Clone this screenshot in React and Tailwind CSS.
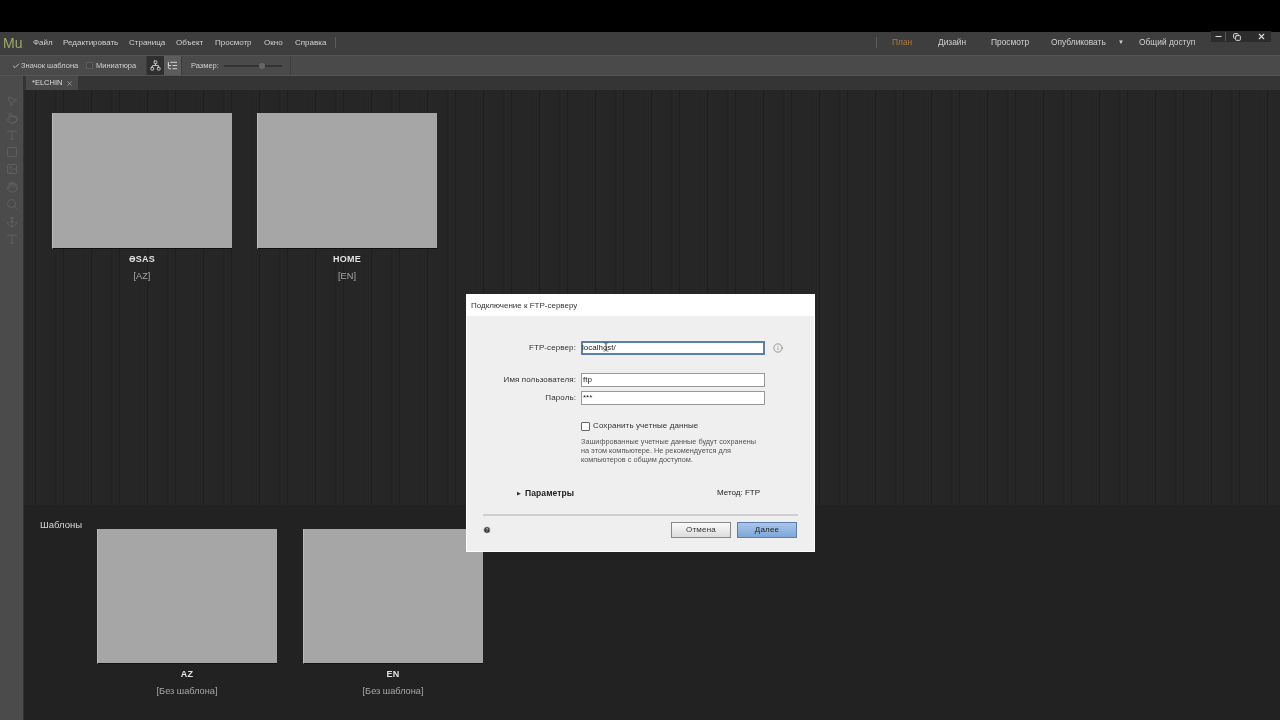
import { Anchor, Check, Hand, Info, ListTree, Minus, MousePointer2, Network, Search, Square, Type, X, Copy, Image, CircleHelp, Pointer, TextCursor } from "lucide-react"

const menus = [
  { label: "Файл", w: "w-[30px]" },
  { label: "Редактировать", w: "w-[66px]" },
  { label: "Страница", w: "w-[47px]" },
  { label: "Объект", w: "w-[39px]" },
  { label: "Просмотр", w: "w-[49px]" },
  { label: "Окно", w: "w-[31px]" },
  { label: "Справка", w: "w-[40px]" },
]

const tools = [
  { icon: MousePointer2, cls: "mt-[5px]" },
  { icon: Pointer, cls: "mt-[5px]" },
  { icon: Type, cls: "mt-[5px]" },
  { icon: Square, cls: "mt-[5px]" },
  { icon: Image, cls: "mt-[5px]" },
  { icon: Hand, cls: "mt-[6px]" },
  { icon: Search, cls: "mt-[5px]" },
  { icon: Anchor, cls: "mt-[6px]" },
  { icon: Type, cls: "mt-[5px]" },
]

function Thumb({ title, sub, h = "h-[136px]" }) {
  return (
    <div className="flex w-[180px] flex-col items-center">
      <div className={`${h} w-full border-b border-l border-b-[#111] border-l-[#bbb] bg-[#a6a6a6]`} />
      <div className="mt-[5px] text-[9px] leading-[11px] font-bold tracking-[0.3px] text-[#e2e2e2]">{title}</div>
      <div className="mt-[6px] text-[9.2px] leading-[11px] text-[#a8a8a8]">{sub}</div>
    </div>
  )
}

function Field({ label, value, focus, className }) {
  return (
    <div className={`flex items-center ${className}`}>
      <div className="w-[115px] pr-[5px] text-right text-[8px] tracking-[0.1px] text-[#333]">{label}</div>
      <div
        className={`relative flex h-[14px] w-[184px] items-center bg-white text-[8px] text-[#222] ${
          focus ? "border border-[#5a7fa8] shadow-[inset_0_0_0_1px_#5a7fa8]" : "border border-[#999] pl-[1px]"
        }`}
      >
        {value}
        {focus && <TextCursor className="absolute top-0 left-[19px] h-[10px] w-[10px] text-[#222]" strokeWidth={1.5} />}
      </div>
      {focus && <Info className="ml-[8px] h-[10px] w-[10px] text-[#666]" strokeWidth={1.5} />}
    </div>
  )
}

export default function App() {
  return (
    <div className="relative flex h-[720px] w-[1280px] flex-col overflow-hidden bg-black font-['Liberation_Sans',Arial,sans-serif] blur-[0.35px]">
      {/* menu bar */}
      <div className="mt-[32px] flex h-[23px] items-center bg-[#3e3e3e] pb-[2px] text-[8px] text-[#d0d0d0]">
        <div className="w-[33px] pl-[3px] text-[14px] leading-none text-[#9fa86a]">Mu</div>
        {menus.map((m) => (
          <div key={m.label} className={m.w}>
            {m.label}
          </div>
        ))}
        <div className="h-[11px] w-px bg-[#5c5c5c]" />
        <div className="ml-[540px] h-[11px] w-px bg-[#5c5c5c]" />
        <div className="ml-[15px] w-[46px] text-[8.4px] text-[#b07a3c]">План</div>
        <div className="w-[53px] text-[8.4px]">Дизайн</div>
        <div className="w-[60px] text-[8.4px]">Просмотр</div>
        <div className="w-[67px] text-[8.4px]">Опубликовать</div>
        <div className="w-[21px] text-[6px]">▼</div>
        <div className="w-[72px] text-[8.4px]">Общий доступ</div>
        <div className="-mt-[12px] flex h-[11px] w-[60px] items-center bg-[#2c2c2c] text-[#ddd]">
          <div className="flex w-[15px] justify-center border-r border-[#555]">
            <Minus className="h-[9px] w-[9px]" strokeWidth={3} />
          </div>
          <div className="flex w-[22px] justify-center">
            <Copy className="h-[8px] w-[8px]" strokeWidth={3} />
          </div>
          <div className="flex flex-1 justify-center pl-[4px]">
            <X className="h-[9px] w-[9px]" strokeWidth={3} />
          </div>
        </div>
      </div>

      {/* toolbar */}
      <div className="flex h-[21px] items-center border-y border-y-[#555] bg-[#4a4a4a] text-[7.5px] text-[#cfcfcf]">
        <Check className="ml-[12px] h-[8px] w-[8px]" strokeWidth={2.5} />
        <span className="ml-[1px] w-[65px]">Значок шаблона</span>
        <span className="h-[7px] w-[7px] border border-[#5c5c5c] bg-[#444]" />
        <span className="ml-[3px] w-[50px]">Миниатюра</span>
        <div className="flex h-full items-center border-x border-[#3c3c3c]">
          <div className="flex h-full w-[17px] items-center justify-center bg-[#2f2f2f]">
            <Network className="h-[11px] w-[11px] text-[#ccc]" />
          </div>
          <div className="flex h-full w-[17px] items-center justify-center bg-[#5c5c5c]">
            <ListTree className="h-[11px] w-[11px] text-[#ddd]" />
          </div>
        </div>
        <span className="ml-[9px] w-[33px]">Размер:</span>
        <div className="relative h-[2px] w-[58px] bg-[#333]">
          <div className="absolute -top-[2px] left-[35px] h-[6px] w-[6px] rounded-full bg-[#666]" />
        </div>
        <div className="ml-[8px] h-full w-px bg-[#3c3c3c]" />
      </div>

      <div className="flex flex-1">
        {/* tools strip */}
        <div className="flex w-[24px] flex-col items-center border-r border-[#333] bg-[#4b4b4b] pt-[14px] text-[#666]">
          {tools.map(({ icon: Icon, cls }, i) => (
            <Icon key={i} className={`h-[12px] w-[12px] ${cls}`} strokeWidth={1.5} />
          ))}
        </div>

        <div className="flex flex-1 flex-col bg-[#222]">
          {/* tab bar */}
          <div className="flex h-[14px] bg-[#353535] pl-[2px]">
            <div className="flex w-[52px] items-center bg-[#494949] pl-[6px] text-[7.5px] text-[#ddd]">
              *ELCHIN
              <X className="ml-[4px] h-[7px] w-[7px] text-[#bbb]" />
            </div>
          </div>

          {/* pages */}
          <div className="flex h-[415px] gap-[25px] bg-[#262626] bg-[repeating-linear-gradient(90deg,transparent_0,transparent_3px,#232323_3px,#232323_4px,transparent_4px,transparent_11px,#1f1f1f_11px,#1f1f1f_12px,transparent_12px,transparent_28px)] pt-[23px] pl-[28px]">
            <Thumb title="ƏSAS" sub="[AZ]" />
            <Thumb title="HOME" sub="[EN]" />
          </div>

          {/* masters */}
          <div className="flex flex-1 pt-[24px] pl-[16px]">
            <div className="-mt-[10px] w-[57px] text-[9.5px] leading-[12px] text-[#d8d8d8]">Шаблоны</div>
            <div className="flex gap-[26px]">
              <Thumb title="AZ" sub="[Без шаблона]" h="h-[135px]" />
              <Thumb title="EN" sub="[Без шаблона]" h="h-[135px]" />
            </div>
          </div>
        </div>
      </div>

      {/* ftp dialog */}
      <div className="absolute top-[294px] left-[466px] flex h-[258px] w-[349px] flex-col bg-[#efefef] text-[#333] shadow-[inset_1px_0_0_#fff,inset_-1px_0_0_#fff,inset_0_-1px_0_#fff]">
        <div className="flex h-[22px] items-center bg-white pt-[1px] pl-[5px] text-[8px] text-[#333]">
          Подключение к FTP-серверу
        </div>
        <Field label="FTP-сервер:" value="localhost/" focus className="mt-[25px]" />
        <Field label="Имя пользователя:" value="ftp" className="mt-[18px]" />
        <Field label="Пароль:" value="***" className="mt-[4px]" />
        <div className="mt-[15px] ml-[115px] flex items-center">
          <span className="h-[9px] w-[9px] rounded-[1px] border border-[#666] bg-white" />
          <span className="ml-[3px] text-[8px] tracking-[0.1px]">Сохранить учетные данные</span>
        </div>
        <p className="mt-[5px] ml-[115px] w-[180px] text-[7.3px] leading-[9px] text-[#555]">
          Зашифрованные учетные данные будут сохранены на этом компьютере. Не рекомендуется для компьютеров с общим
          доступом.
        </p>
        <div className="mt-[23px] flex items-center pr-[55px] pl-[51px]">
          <span className="text-[5px]">▶</span>
          <span className="ml-[4px] text-[8.5px] font-bold tracking-[0.1px] text-[#222]">Параметры</span>
          <span className="ml-auto text-[8px] text-[#222]">Метод: FTP</span>
        </div>
        <div className="mx-[17px] mt-[14px] h-[2px] bg-[#cfcfcf]" />
        <div className="mt-[6px] flex items-center pr-[18px] pl-[17px]">
          <CircleHelp className="h-[8px] w-[8px] fill-[#333] text-[#eee]" strokeWidth={2} />
          <button className="ml-auto h-[16px] w-[60px] border border-[#888] bg-[linear-gradient(#fafafa,#dcdcdc)] text-[8px] tracking-[0.2px] text-[#333]">
            Отмена
          </button>
          <button className="ml-[6px] h-[16px] w-[60px] border border-[#5d7ea8] bg-[linear-gradient(#a9c6ea,#7fa6d8)] text-[8px] tracking-[0.2px] text-[#222]">
            Далее
          </button>
        </div>
      </div>
    </div>
  )
}
